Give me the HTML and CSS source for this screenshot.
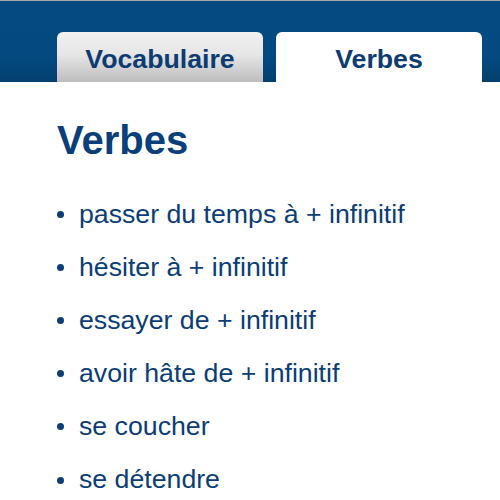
FILE: index.html
```html
<!DOCTYPE html>
<html lang="fr">
<head>
    <meta charset="UTF-8">
    <meta name="viewport" content="width=device-width, initial-scale=1.0">
    <title>Verbes</title>
    <link rel="stylesheet" href="styles.css">
</head>
<body>
    <header class="topbar">
        <nav class="tabs">
            <a class="tab" href="#vocabulaire">Vocabulaire</a>
            <a class="tab active" href="#verbes">Verbes</a>
        </nav>
    </header>
    <main class="content">
        <h1>Verbes</h1>
        <ul class="words">
            <li>passer du temps à + infinitif</li>
            <li>hésiter à + infinitif</li>
            <li>essayer de + infinitif</li>
            <li>avoir hâte de + infinitif</li>
            <li>se coucher</li>
            <li>se détendre</li>
        </ul>
    </main>
</body>
</html>
```

FILE: styles.css
```css
body {
    margin: 0;
    font-family: "Liberation Sans", Arial, sans-serif;
    background: #fff;
    color: #0b3d76;
}
.topbar {
    border-top: 1px solid #a8a8a8;
    background: linear-gradient(#054b82, #044a80 70%, #033f6e);
}
.tabs {
    display: flex;
    gap: 13px;
    padding: 31px 0 0 57px;
}
.tab {
    width: 206px;
    height: 46px;
    padding-top: 4px;
    line-height: 46px;
    text-align: center;
    font-size: 26.7px;
    font-weight: bold;
    color: #0c3c72;
    text-decoration: none;
    border-radius: 6px 6px 0 0;
    background: linear-gradient(#f1f1f1, #e6e6e6 45%, #bdbdbd);
}
.tab.active {
    background: #fff;
}
.content {
    padding-left: 57px;
}
h1 {
    margin: 36px 0 26px;
    font-size: 40px;
    line-height: 44px;
    color: #0a3f7a;
}
.words {
    margin: 0;
    padding: 0;
    list-style: none;
}
.words li {
    display: flex;
    align-items: center;
    font-size: 26.7px;
    line-height: 53.1px;
}
.words li::before {
    content: "";
    width: 7px;
    height: 7px;
    margin: 0 15px 0 0;
    border-radius: 50%;
    background: #0b3d76;
    flex: none;
}
```
